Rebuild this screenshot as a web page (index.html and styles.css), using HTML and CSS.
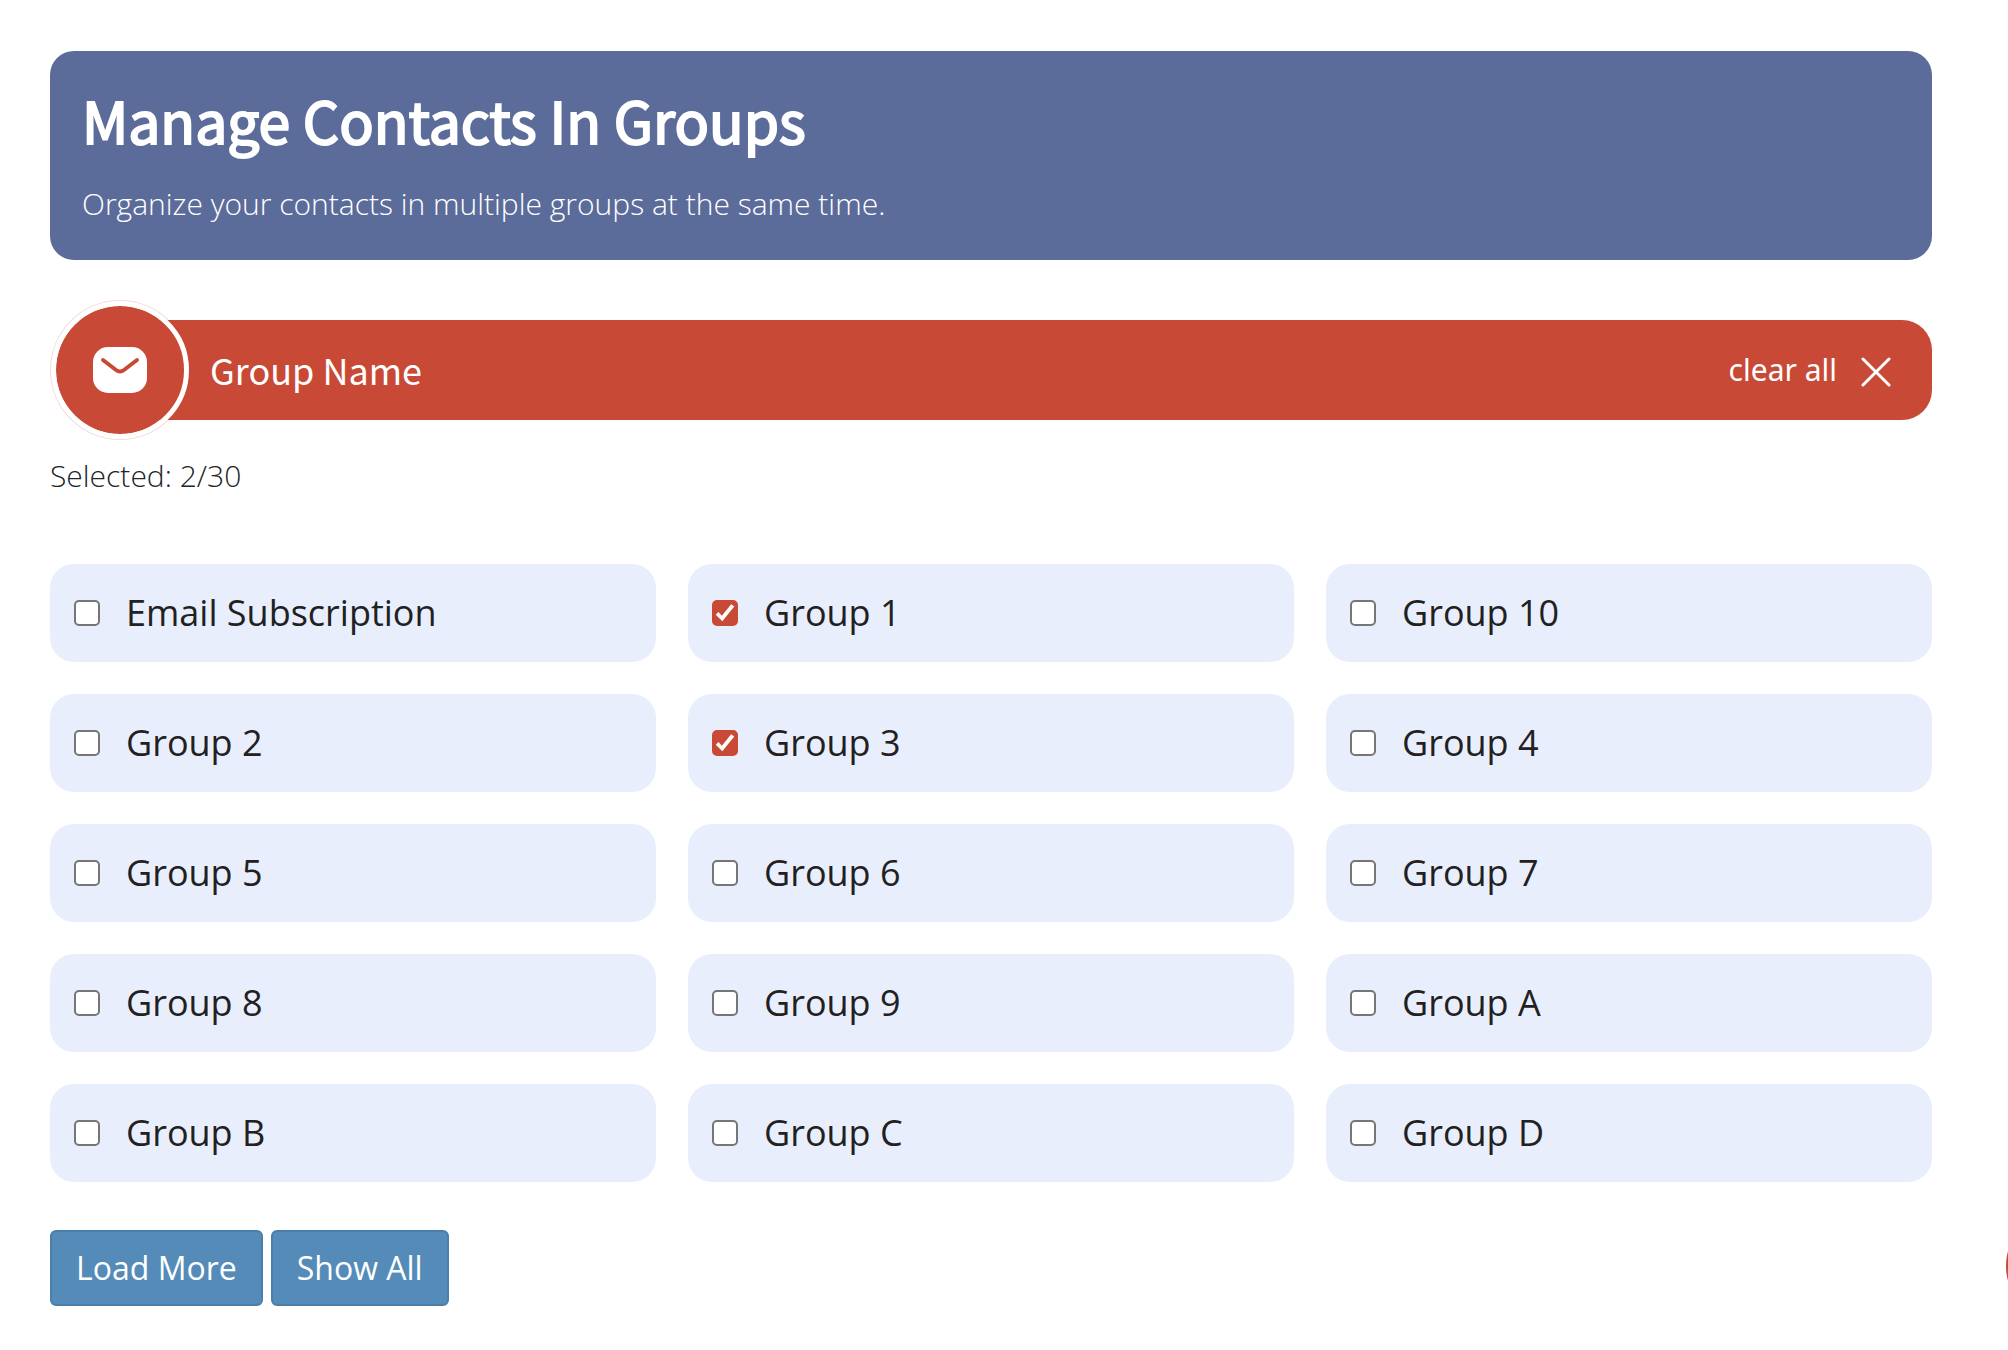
FILE: index.html
```
<!DOCTYPE html>
<html lang="en">
<head>
    <meta charset="UTF-8">
    <meta name="viewport" content="width=device-width, initial-scale=1.0">
    <title>Manage Contacts In Groups</title>

    <link rel="stylesheet" href="styles.css">
</head>
<body>

    <main class="container">
        <header class="banner">
            <h1>Manage Contacts In Groups</h1>
            <p>Organize your contacts in multiple groups at the same time.</p>
        </header>

        <div class="group-head">
            <div class="group-icon">
                <svg width="54" height="46" viewBox="0 0 54 46" aria-hidden="true">
                    <rect width="54" height="46" rx="15" fill="#fff"/>
                    <path d="M10 13 L23 23 Q27 26 31 23 L44 13" fill="none" stroke="#c84935" stroke-width="4" stroke-linecap="round" stroke-linejoin="round"/>
                </svg>
            </div>
            <div class="group-bar">
                <h2>Group Name</h2>
                <button type="button" class="clear">
                    clear all
                    <svg width="30" height="36" viewBox="0 0 30 36" aria-hidden="true">
                        <path d="M2 8 L28 34 M28 8 L2 34" fill="none" stroke="#fff" stroke-width="3" stroke-linecap="round"/>
                    </svg>
                </button>
            </div>
        </div>

        <p class="selected">Selected: 2/30</p>

        <div class="groups">
            <label class="group"><input type="checkbox"> Email Subscription</label>
            <label class="group"><input type="checkbox" checked> Group 1</label>
            <label class="group"><input type="checkbox"> Group 10</label>
            <label class="group"><input type="checkbox"> Group 2</label>
            <label class="group"><input type="checkbox" checked> Group 3</label>
            <label class="group"><input type="checkbox"> Group 4</label>
            <label class="group"><input type="checkbox"> Group 5</label>
            <label class="group"><input type="checkbox"> Group 6</label>
            <label class="group"><input type="checkbox"> Group 7</label>
            <label class="group"><input type="checkbox"> Group 8</label>
            <label class="group"><input type="checkbox"> Group 9</label>
            <label class="group"><input type="checkbox"> Group A</label>
            <label class="group"><input type="checkbox"> Group B</label>
            <label class="group"><input type="checkbox"> Group C</label>
            <label class="group"><input type="checkbox"> Group D</label>
        </div>

        <div class="actions">
            <button type="button" class="btn">Load More</button>
            <button type="button" class="btn">Show All</button>
        </div>
    </main>

    <div class="bubble"></div>

</body>
</html>
```
FILE: styles.css
```
* {
    box-sizing: border-box;
}

body {
    margin: 0;
    background-color: #fff;
    color: #212529;
    font-family: "Open Sans", "Noto Sans", sans-serif;
    font-size: 30px;
}

h1,
h2,
p {
    margin: 0;
}

button {
    font-family: inherit;
    cursor: pointer;
}

.container {
    padding: 51px 76px 44px 50px;
}

.banner {
    padding: 32px;
    border-radius: 24px;
    background-color: #5c6c9a;
    color: #fff;
}

.banner h1 {
    font-family: "Noto Sans CJK SC", sans-serif;
    font-size: 57px;
    font-weight: 400;
    line-height: 72px;
    -webkit-text-stroke: 2px #fff;
}

.banner p {
    margin-top: 26px;
    padding-bottom: 2px;
    font-weight: 300;
    line-height: 45px;
}

.group-head {
    display: flex;
    align-items: center;
    margin-top: 40px;
}

.group-icon {
    display: flex;
    justify-content: center;
    align-items: center;
    flex: none;
    width: 138px;
    height: 138px;
    margin: 1px;
    border: 5px solid #fff;
    border-radius: 50%;
    background-color: #c84935;
    background-clip: padding-box;
    box-shadow: 0 0 0 1px rgba(200, 73, 53, 0.2);
    z-index: 1;
}

.group-bar {
    display: flex;
    justify-content: space-between;
    align-items: center;
    flex: 1;
    height: 100px;
    margin-left: -70px;
    padding: 0 41px 2px 90px;
    border-radius: 0 30px 30px 0;
    background-color: #c84935;
    color: #fff;
}

.group-bar h2 {
    font-family: "Noto Sans CJK SC", sans-serif;
    font-size: 36px;
    font-weight: 400;
}

.clear {
    display: flex;
    align-items: center;
    gap: 24px;
    padding: 0;
    border: none;
    background: none;
    color: #fff;
    font-family: "Noto Sans", sans-serif;
    font-size: 30px;
}

.selected {
    margin-top: 13px;
    font-weight: 300;
    line-height: 45px;
}

.groups {
    display: grid;
    grid-template-columns: repeat(3, 1fr);
    gap: 32px;
    margin-top: 66px;
}

.group {
    display: flex;
    align-items: center;
    gap: 26px;
    padding: 22px 24px;
    border-radius: 24px;
    background-color: #e9eefd;
    color: #212121;
    font-size: 36px;
    line-height: 54px;
    cursor: pointer;
}

.group input {
    appearance: none;
    display: grid;
    flex: none;
    width: 26px;
    height: 26px;
    margin: 0;
    border: 2px solid #767676;
    border-radius: 5px;
    background-color: #fff;
}

.group input:checked {
    border-color: #c84935;
    background-color: #c84935;
}

.group input:checked::before {
    content: "";
    background-color: #fff;
    clip-path: polygon(8% 58%, 20% 46%, 36% 62%, 78% 10%, 92% 21%, 38% 88%);
}

.actions {
    display: flex;
    gap: 8px;
    margin-top: 48px;
}

.btn {
    padding: 12px 24px;
    border: 2px solid #4a7eab;
    border-radius: 6px;
    background-color: #548bb8;
    color: #fff;
    font-size: 32px;
    line-height: 48px;
}

/* round widget tucked behind the right edge */
.bubble {
    position: fixed;
    right: -110px;
    bottom: 28px;
    width: 112px;
    height: 112px;
    border-radius: 50%;
    background-color: #c84935;
}
```
